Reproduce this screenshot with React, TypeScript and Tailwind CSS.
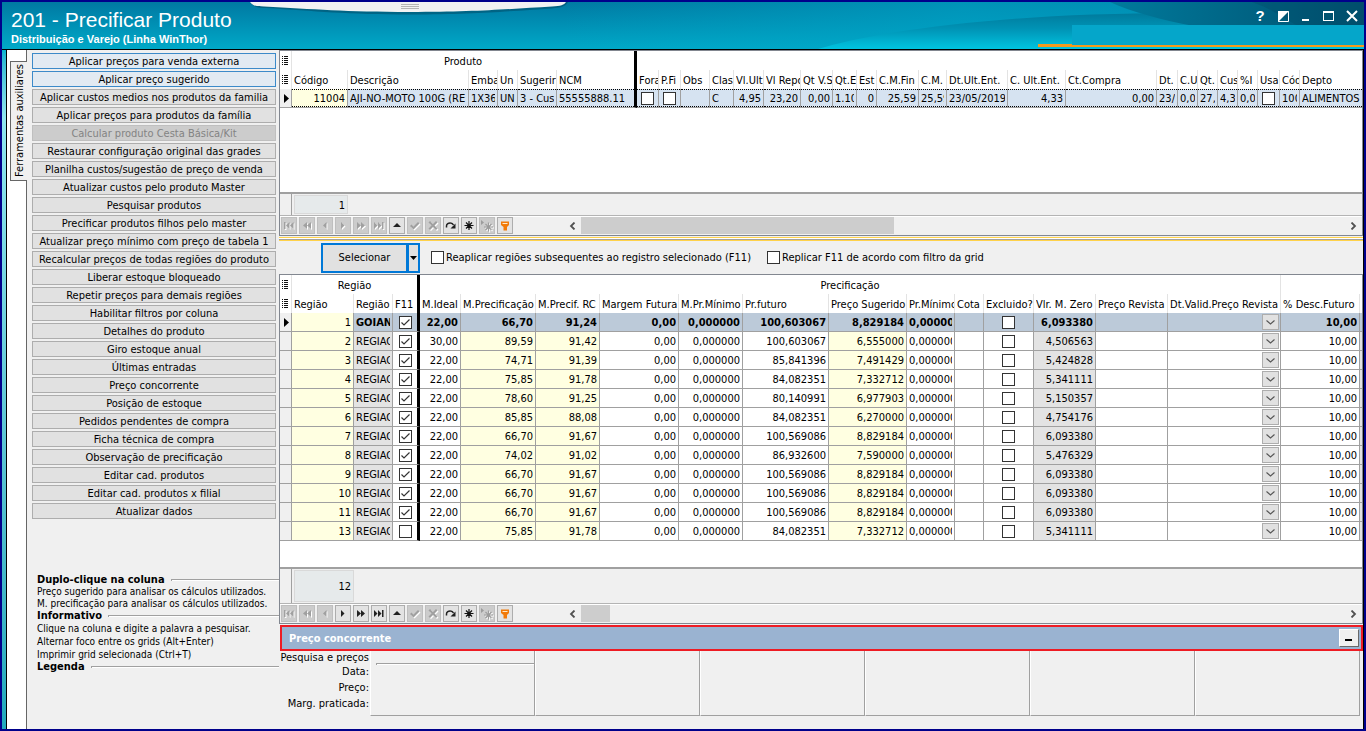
import React from "react";

const FONT = "font-['DejaVu_Sans_Condensed','Noto_Sans',sans-serif]";

const sideButtons = [
  "Aplicar preços para venda externa",
  "Aplicar preço sugerido",
  "Aplicar custos medios nos produtos da familia",
  "Aplicar preços para produtos da família",
  "Calcular produto Cesta Básica/Kit",
  "Restaurar configuração original das grades",
  "Planilha custos/sugestão de preço de venda",
  "Atualizar custos pelo produto Master",
  "Pesquisar produtos",
  "Precificar produtos filhos pelo master",
  "Atualizar preço mínimo com preço de tabela 1",
  "Recalcular preços de todas regiões do produto",
  "Liberar estoque bloqueado",
  "Repetir preços para demais regiões",
  "Habilitar filtros por coluna",
  "Detalhes do produto",
  "Giro estoque anual",
  "Últimas entradas",
  "Preço concorrente",
  "Posição de estoque",
  "Pedidos pendentes de compra",
  "Ficha técnica de compra",
  "Observação de precificação",
  "Editar cad. produtos",
  "Editar cad. produtos x filial",
  "Atualizar dados",
];

type Col = { w: string; head: string; val?: string; right?: boolean; kind?: "check" | "yellow" };

const productCols: Col[] = [
  { w: "w-[56px]", head: "Código", val: "11004", right: true, kind: "yellow" },
  { w: "w-[121px]", head: "Descrição", val: "AJI-NO-MOTO 100G (RE" },
  { w: "w-[29px]", head: "Emba", val: "1X36" },
  { w: "w-[20px]", head: "Un", val: "UN" },
  { w: "w-[39px]", head: "Sugerir", val: "3 - Cus" },
  { w: "w-[80px]", head: "NCM", val: "55555888.11" },
  { w: "w-[22px]", head: "Fora", kind: "check" },
  { w: "w-[22px]", head: "P.Fi", kind: "check" },
  { w: "w-[29px]", head: "Obs" },
  { w: "w-[24px]", head: "Clas", val: "C" },
  { w: "w-[30px]", head: "Vl.Ult", val: "4,95", right: true },
  { w: "w-[37px]", head: "Vl Repo", val: "23,20", right: true },
  { w: "w-[32px]", head: "Qt V.S", val: "0,00", right: true },
  { w: "w-[24px]", head: "Qt.E", val: "1.10" },
  { w: "w-[20px]", head: "Est", val: "0", right: true },
  { w: "w-[42px]", head: "C.M.Fin", val: "25,59", right: true },
  { w: "w-[28px]", head: "C.M.", val: "25,59" },
  { w: "w-[61px]", head: "Dt.Ult.Ent.", val: "23/05/2019" },
  { w: "w-[58px]", head: "C. Ult.Ent.", val: "4,33", right: true },
  { w: "w-[91px]", head: "Ct.Compra", val: "0,00", right: true },
  { w: "w-[21px]", head: "Dt.", val: "23/" },
  { w: "w-[20px]", head: "C.U", val: "0,0" },
  { w: "w-[20px]", head: "Qt.", val: "27," },
  { w: "w-[20px]", head: "Cus", val: "4,3" },
  { w: "w-[20px]", head: "%I", val: "0,0" },
  { w: "w-[22px]", head: "Usa", kind: "check" },
  { w: "w-[20px]", head: "Cód", val: "100" },
  { w: "w-auto", head: "Depto", val: "ALIMENTOS" },
];

type RCol = { w: string; head: string };
const regionCols: RCol[] = [
  { w: "w-[62px]", head: "Região" },
  { w: "w-[39px]", head: "Região" },
  { w: "w-[27px]", head: "F11" },
  { w: "w-[41px]", head: "M.Ideal" },
  { w: "w-[75px]", head: "M.Precificação" },
  { w: "w-[64px]", head: "M.Precif. RC" },
  { w: "w-[79px]", head: "Margem Futura" },
  { w: "w-[64px]", head: "M.Pr.Mínimo" },
  { w: "w-[86px]", head: "Pr.futuro" },
  { w: "w-[78px]", head: "Preço Sugerido" },
  { w: "w-[48px]", head: "Pr.Mínimo" },
  { w: "w-[29px]", head: "Cota" },
  { w: "w-[50px]", head: "Excluido?" },
  { w: "w-[62px]", head: "Vlr. M. Zero" },
  { w: "w-[72px]", head: "Preço Revista" },
  { w: "w-[113px]", head: "Dt.Valid.Preço Revista" },
  { w: "w-[79px]", head: "% Desc.Futuro" },
];

type Row = [string, string, boolean, string, string, string, string, string, string];
const rows: Row[] = [
  ["1", "GOIAN", true, "22,00", "66,70", "91,24", "100,603067", "8,829184", "6,093380"],
  ["2", "REGIAO", true, "30,00", "89,59", "91,42", "100,603067", "6,555000", "4,506563"],
  ["3", "REGIAO", true, "22,00", "74,71", "91,39", "85,841396", "7,491429", "5,424828"],
  ["4", "REGIAO", true, "22,00", "75,85", "91,78", "84,082351", "7,332712", "5,341111"],
  ["5", "REGIAO", true, "22,00", "78,60", "91,25", "80,140991", "6,977903", "5,150357"],
  ["6", "REGIAO", true, "22,00", "85,85", "88,08", "84,082351", "6,270000", "4,754176"],
  ["7", "REGIAO", true, "22,00", "66,70", "91,67", "100,569086", "8,829184", "6,093380"],
  ["8", "REGIAO", true, "22,00", "74,02", "91,02", "86,932600", "7,590000", "5,476329"],
  ["9", "REGIAO", true, "22,00", "66,70", "91,67", "100,569086", "8,829184", "6,093380"],
  ["10", "REGIAO", true, "22,00", "66,70", "91,67", "100,569086", "8,829184", "6,093380"],
  ["11", "REGIAO", true, "22,00", "66,70", "91,67", "100,569086", "8,829184", "6,093380"],
  ["13", "REGIAO", false, "22,00", "75,85", "91,78", "84,082351", "7,332712", "5,341111"],
];

function Check({ label, id, checked = false }: { label?: string; id?: string; checked?: boolean }) {
  return (
    <span className="relative inline-grid size-[13px] shrink-0 place-items-center">
      <input
        type="checkbox"
        id={id}
        aria-label={label}
        defaultChecked={checked}
        className="peer col-start-1 row-start-1 size-[13px] appearance-none border border-[#333] bg-white"
      />
      <svg viewBox="0 0 13 13" className="pointer-events-none col-start-1 row-start-1 hidden size-[13px] peer-checked:block">
        <path d="M2.5 6.5 5 9 10.5 3.5" fill="none" stroke="#333" strokeWidth="1.2" />
      </svg>
    </span>
  );
}

function ListIcon() {
  return (
    <svg viewBox="0 0 7 9" className="mx-auto h-[9px] w-[7px]" shapeRendering="crispEdges">
      {[0, 2, 4, 6, 8].map((y) => (
        <path key={y} d={`M0 ${y}h1v1h-1zM2 ${y}h4v1h-4z`} fill="#111" />
      ))}
    </svg>
  );
}

function Marker() {
  return (
    <svg viewBox="0 0 5 9" className="ml-[4px] h-[9px] w-[5px]">
      <path d="M0 0 5 4.5 0 9z" fill="#000" />
    </svg>
  );
}

const navIcons: { name: string; d: string; always?: boolean }[] = [
  { name: "Primeiro", d: "M2 3h1.5v7H2zM7.5 3v7L4 6.5zM11.5 3v7L8 6.5z" },
  { name: "Página anterior", d: "M7 3v7L3 6.5zM11 3v7L7 6.5z" },
  { name: "Anterior", d: "M8.5 3v7L5 6.5z" },
  { name: "Próximo", d: "M5 3v7L8.5 6.5z" },
  { name: "Próxima página", d: "M3 3v7l4-3.5zM7 3v7l4-3.5z" },
  { name: "Último", d: "M2 3v7l3.5-3.5zM6 3v7l3.5-3.5zM10 3h1.500v7H10z" },
  { name: "Subir", d: "M7 4l4 4H3z", always: true },
  { name: "Confirmar", d: "M2 7l1.500-1.500L5.500 7.500 10 3l1.500 1.500-6 6z" },
  { name: "Cancelar", d: "M2.500 3.500 4 2l3 3 3-3 1.500 1.500-3 3 3 3L10 11 7 8l-3 3-1.500-1.500 3-3z" },
];

function NavButton({ name, enabled, children }: { name: string; enabled: boolean; children: React.ReactNode }) {
  return (
    <button
      type="button"
      aria-label={name}
      disabled={!enabled}
      className={
        enabled
          ? "grid h-[17px] w-4 place-items-center border border-[#adadad] bg-[#e3e3e3] text-[#222]"
          : "grid h-[17px] w-4 place-items-center border border-[#bfbfbf] bg-[#cccccc] text-[#a0a0a0]"
      }
    >
      <svg viewBox="0 0 14 14" className="size-[14px]">
        {children}
      </svg>
    </button>
  );
}

function Glyph({ d, enabled }: { d: string; enabled: boolean }) {
  return (
    <>
      {!enabled && <path d={d} fill="#fff" transform="translate(1 1)" />}
      <path d={d} fill="currentColor" />
    </>
  );
}

function Navigator({ forward, thumb }: { forward: boolean; thumb: string }) {
  const star = "M7 2v9M2.500 6.500h9M4 3.500l6 6M10 3.500l-6 6";
  return (
    <div className="flex h-[19px] items-center border-t border-white pb-[1px] pl-[1px]">
      <div className="flex w-[283px] shrink-0 gap-[2px]">
        {navIcons.map((n, i) => {
          const enabled = !!n.always || (forward && i >= 3 && i <= 5);
          return (
            <NavButton key={n.name} name={n.name} enabled={enabled}>
              <Glyph d={n.d} enabled={enabled} />
            </NavButton>
          );
        })}
        <NavButton name="Atualizar" enabled>
          <path d="M2.500 8.500V7c0-2 2-3.200 4-3 1.500.1 2.500 1 3 2" fill="none" stroke="currentColor" strokeWidth="1.500" />
          <path d="M11.500 4.500v5h-5z" fill="currentColor" />
        </NavButton>
        <NavButton name="Marcar" enabled>
          <path d={star} stroke="#111" strokeWidth="1.200" fill="none" />
        </NavButton>
        <NavButton name="Ir para marca" enabled={false}>
          <g transform="translate(1.500 1.500)">
            <path d={star} stroke="#fff" strokeWidth="1.200" fill="none" transform="translate(1 1)" />
            <path d={star} stroke="#9c9c9c" strokeWidth="1.200" fill="none" />
          </g>
          <path d="M1 1l3 2.500L1 6z" fill="#9c9c9c" />
        </NavButton>
        <NavButton name="Filtrar" enabled>
          <path d="M3 2.500h8V6L9 8v3.500H5.500V8L3 6z" fill="#f27a08" />
          <path d="M4.500 4.500h5" stroke="#ffe9c8" />
        </NavButton>
      </div>
      <div className="flex h-[17px] min-w-0 flex-1 items-center">
        <button type="button" aria-label="Rolar para a esquerda" className="grid h-[17px] w-[17px] shrink-0 place-items-center">
          <svg viewBox="0 0 7 8" className="h-2 w-[7px]">
            <path d="M5.500.5 2 4l3.500 3.500" fill="none" stroke="#505050" strokeWidth="1.800" />
          </svg>
        </button>
        <div className="h-full min-w-0 flex-1">
          <div className={thumb} />
        </div>
        <button type="button" aria-label="Rolar para a direita" className="grid h-[17px] w-[17px] shrink-0 place-items-center">
          <svg viewBox="0 0 7 8" className="h-2 w-[7px]">
            <path d="M1.500.5 5 4 1.500 7.500" fill="none" stroke="#505050" strokeWidth="1.800" />
          </svg>
        </button>
      </div>
    </div>
  );
}

const clip = "overflow-hidden whitespace-nowrap";

function Cell({ children, right, className = "" }: { children?: React.ReactNode; right?: boolean; className?: string }) {
  return (
    <td className={`h-[19px] border-r border-b border-[#a0a0a0] p-0 px-[2px] pt-[2px] leading-4 ${className}`}>
      <div className={right ? `${clip} text-right` : clip}>{children}</div>
    </td>
  );
}

function ProductGrid() {
  return (
    <table className="w-full table-fixed border-separate border-spacing-0 bg-white leading-4">
      <colgroup>
        <col className="w-[12px]" />
        {productCols.map((c, i) => (
          <col key={i} className={c.w} />
        ))}
      </colgroup>
      <thead>
        <tr className="h-[19px]">
          <th className="border-r border-[#e3e3e3] p-0"><ListIcon /></th>
          <th colSpan={6} className="border-r-[3px] border-black p-0 pt-[2px] font-normal">Produto</th>
          <th colSpan={22} className="p-0" />
        </tr>
        <tr className="h-[19px]">
          <th className="border-r border-[#e3e3e3] p-0"><ListIcon /></th>
          {productCols.map((c, i) => (
            <th
              key={i}
              className={
                i === 5
                  ? "border-r-[3px] border-black p-0 pt-[3px] pl-[2px] text-left font-normal"
                  : i === productCols.length - 1
                    ? "p-0 pt-[3px] pl-[2px] text-left font-normal"
                    : "border-r border-[#e3e3e3] p-0 pt-[3px] pl-[2px] text-left font-normal"
              }
            >
              <div className={clip}>{c.head}</div>
            </th>
          ))}
        </tr>
      </thead>
      <tbody>
        <tr>
          <td className="border-r border-b border-[#a0a0a0] bg-[#f0f0f0] p-0"><Marker /></td>
          {productCols.map((c, i) => (
            <td
              key={i}
              className={
                i === 5
                  ? "border-r-[3px] border-b border-r-black border-b-[#a0a0a0] bg-[#d6e3f1] p-0"
                  : c.kind === "yellow"
                    ? "border-r border-b border-[#a0a0a0] bg-[#ffffe1] p-0"
                    : i === productCols.length - 1
                      ? "border-b border-[#a0a0a0] bg-[#d6e3f1] p-0"
                      : "border-r border-b border-[#a0a0a0] bg-[#d6e3f1] p-0"
              }
            >
              <div className="flex h-[18px] items-center border-y border-dotted border-black px-[2px] leading-4">
                {c.kind === "check" ? (
                  <span className="flex flex-1 justify-center"><Check label={c.head} /></span>
                ) : (
                  <span className={c.right ? `flex-1 pt-px text-right ${clip}` : `flex-1 pt-px ${clip}`}>{c.val}</span>
                )}
              </div>
            </td>
          ))}
        </tr>
      </tbody>
    </table>
  );
}

function RegionGrid() {
  return (
    <table className="w-full table-fixed border-separate border-spacing-0 bg-white leading-4">
      <colgroup>
        <col className="w-[12px]" />
        {regionCols.map((c, i) => (
          <col key={i} className={c.w} />
        ))}
        <col />
      </colgroup>
      <thead>
        <tr className="h-[19px]">
          <th className="border-r border-[#e3e3e3] p-0"><ListIcon /></th>
          <th colSpan={3} className="border-r-[3px] border-black p-0 pt-[3px] font-normal">Região</th>
          <th colSpan={13} className="border-r border-[#e3e3e3] p-0 pt-[3px] font-normal">Precificação</th>
          <th colSpan={2} className="p-0" />
        </tr>
        <tr className="h-[19px]">
          <th className="border-r border-[#e3e3e3] p-0"><ListIcon /></th>
          {regionCols.map((c, i) => (
            <th
              key={i}
              className={
                i === 2
                  ? "border-r-[3px] border-black p-0 pt-[3px] pl-[2px] text-left font-normal"
                  : "border-r border-[#e3e3e3] p-0 pt-[3px] pl-[2px] text-left font-normal"
              }
            >
              <div className={clip}>{c.head}</div>
            </th>
          ))}
          <th className="p-0" />
        </tr>
      </thead>
      <tbody>
        {rows.map((r, i) => {
          const sel = i === 0;
          const bg = sel ? "bg-[#bccad9]" : "bg-white";
          const yellow = sel ? "bg-[#bccad9]" : "bg-[#ffffe1]";
          const gray = sel ? "bg-[#bccad9]" : "bg-[#e3e3e3]";
          return (
            <tr key={r[0]} className={sel ? "font-bold" : ""}>
              <td className="h-[19px] border-r border-b border-[#a0a0a0] bg-[#f0f0f0] p-0 leading-[18px]">{sel && <Marker />}</td>
              <Cell right className="bg-[#ffffe1] font-normal">{r[0]}</Cell>
              <Cell className={gray}>{r[1]}</Cell>
              <td className={`h-[19px] border-r-[3px] border-b border-r-black border-b-[#a0a0a0] p-0 ${bg}`}>
                <div className="flex items-center justify-center"><Check label={`F11 região ${r[0]}`} checked={r[2]} /></div>
              </td>
              <Cell right className={bg}>{r[3]}</Cell>
              <Cell right className={yellow}>{r[4]}</Cell>
              <Cell right className={yellow}>{r[5]}</Cell>
              <Cell right className={bg}>0,00</Cell>
              <Cell right className={bg}>0,000000</Cell>
              <Cell right className={bg}>{r[6]}</Cell>
              <Cell right className={yellow}>{r[7]}</Cell>
              <Cell className={bg}>0,000000</Cell>
              <Cell className={bg} />
              <td className={`h-[19px] border-r border-b border-[#a0a0a0] p-0 ${bg}`}>
                <div className="flex items-center justify-center"><Check label={`Excluido região ${r[0]}`} /></div>
              </td>
              <Cell right className={gray}>{r[8]}</Cell>
              <Cell className={bg} />
              <td className={`h-[19px] border-r border-b border-[#a0a0a0] p-0 ${bg}`}>
                <div className="flex items-center justify-end pr-[1px]">
                  <button type="button" aria-label={`Data de validade região ${r[0]}`} className="grid h-4 w-[17px] place-items-center border border-[#adadad] bg-[#e1e1e1]">
                    <svg viewBox="0 0 9 5" className="h-[5px] w-[9px]">
                      <path d="M.5.5l4 3.500 4-3.500" fill="none" stroke="#555" strokeWidth="1.100" />
                    </svg>
                  </button>
                </div>
              </td>
              <Cell right className={bg}>10,00</Cell>
              <td className={sel ? "border-b border-[#a0a0a0] bg-[#bccad9] p-0" : "border-b border-[#a0a0a0] bg-[#e3e3e3] p-0"} />
            </tr>
          );
        })}
      </tbody>
    </table>
  );
}

function InfoTitle({ children }: { children: React.ReactNode }) {
  return (
    <h2 className="flex items-center gap-[6px] leading-3 font-bold">
      {children}
      <span className="h-[2px] flex-1 border-t border-l border-[#a0a0a0] bg-white" />
    </h2>
  );
}

function Header() {
  return (
    <header className="relative flex h-[48px] items-start justify-between overflow-hidden border-b border-black bg-linear-to-b from-[#0079a2] to-[#00a9c8] font-['Liberation_Sans',sans-serif] text-white">
      <svg viewBox="0 0 1362 47" preserveAspectRatio="none" className="absolute inset-0 h-[47px] w-full">
        <defs>
          <linearGradient id="sky" x1="0" x2="1" y1="0" y2="0">
            <stop offset="0" stopColor="#00a9c8" stopOpacity="0" />
            <stop offset=".5" stopColor="#00a4c6" stopOpacity=".6" />
            <stop offset="1" stopColor="#0090b4" stopOpacity=".7" />
          </linearGradient>
          <linearGradient id="wave" x1="0" x2="0" y1="0" y2="1">
            <stop offset="0" stopColor="#007a9c" />
            <stop offset=".45" stopColor="#0094b6" />
            <stop offset="1" stopColor="#00c4e0" />
          </linearGradient>
          <linearGradient id="deep" x1="0" x2="1" y1="0" y2="0">
            <stop offset="0" stopColor="#007a9c" />
            <stop offset="1" stopColor="#00506f" />
          </linearGradient>
        </defs>
        <path d="M560 0H1362V47H560z" fill="url(#sky)" />
        <path d="M816 47C870 31 990 11 1180 11L1362 14V47z" fill="url(#wave)" />
        <path d="M1108 0H1362V24H1192C1160 18 1130 10 1108 0z" fill="url(#deep)" />
        <path d="M1250 0c22 8 32 16 46 24h66V0z" fill="#004a68" opacity=".35" />
        <path d="M1070 23H1362V43H1070z" fill="#05a6ca" />
        <path d="M1036 42H1070V43H1362V45H1036z" fill="#f59a1c" />
      </svg>
      <svg viewBox="0 0 320 14" className="absolute top-0 left-[248px] h-[14px] w-[320px]">
        <path d="M0 0c3 5 8 6 16 6 50 3 80 6.500 145 6.500S260 9 302 6.500c9-1 14-2 16-6.500z" fill="#00506c" opacity=".6" />
        <path d="M0 0c3 4 6 4.500 14 4.500C64 7 95 10 160 10s100-3 142-5.500c9-.5 12-1.500 14-4.500z" fill="#f2f2f2" />
        <path d="M151 2.500h18M151 4.500h18M151 6.500h18" stroke="#b5b5b5" />
      </svg>
      <div className="relative pl-[9px]">
        <h1 className="pt-[6px] text-[21px] leading-6">201 - Precificar Produto</h1>
        <p className="text-[11px] leading-[14px] font-bold">Distribuição e Varejo (Linha WinThor)</p>
      </div>
      <div className="relative flex h-7 items-center gap-[7px] pr-1">
        <button type="button" className="w-4 text-center text-[15px] leading-4 font-bold">?</button>
        <button type="button" aria-label="Alternar" className="grid size-4 place-items-center">
          <svg viewBox="0 0 11 11" className="size-[11px]"><path d="M.5.5h10v10H.5z" fill="none" stroke="#fff" /><path d="M0 11V0h11z" fill="#fff" /></svg>
        </button>
        <button type="button" aria-label="Minimizar" className="grid size-4 place-items-center">
          <svg viewBox="0 0 12 12" className="size-3"><path d="M2 9h7v2H2z" fill="#fff" /></svg>
        </button>
        <button type="button" aria-label="Maximizar" className="grid size-4 place-items-center">
          <svg viewBox="0 0 12 12" className="size-3"><path d="M0 1h11v10H0zM1 3v7h9V3z" fill="#fff" fillRule="evenodd" /></svg>
        </button>
        <button type="button" aria-label="Fechar" className="grid size-4 place-items-center">
          <svg viewBox="0 0 12 12" className="size-3"><path d="M1 1l10 10M11 1L1 11" stroke="#fff" strokeWidth="2" /></svg>
        </button>
      </div>
    </header>
  );
}

export default function App() {
  return (
    <div className={`flex min-h-screen flex-col overflow-hidden border-2 border-[#00008b] bg-[#f0f0f0] text-[11px] text-black ${FONT}`}>
      <Header />
      <div className="flex flex-1">
        <div className="w-1 shrink-0 bg-linear-to-b from-[#00b4d0] via-[#8fe6f0] via-10% to-[#1fa9bd]" />
        <div className="flex w-5 shrink-0 flex-col items-end border-l border-black bg-white">
          <button
            type="button"
            className="relative -mr-px mt-[11px] flex h-[120px] w-[17px] items-center justify-center border border-r-0 border-[#666] bg-[#f0f0f0] pl-[2px]"
          >
            <span className="rotate-180 whitespace-nowrap [writing-mode:vertical-rl]">Ferramentas auxiliares</span>
          </button>
        </div>
        <aside className="flex w-[253px] shrink-0 flex-col border-l border-[#666]">
          <div className="flex flex-col gap-[2px] pt-[3px] pr-[3px] pl-[5px]">
            {sideButtons.map((b, i) => (
              <button
                key={b}
                type="button"
                disabled={i === 4}
                className={
                  i < 2
                    ? "h-4 border border-[#3c8ac9] bg-[#e2eaf2] pt-[2px] leading-3 whitespace-nowrap"
                    : i === 4
                      ? "h-4 border border-[#bfbfbf] bg-[#cccccc] pt-[2px] leading-3 whitespace-nowrap text-[#838383]"
                      : "h-4 border border-[#adadad] bg-[#e1e1e1] pt-[2px] leading-3 whitespace-nowrap"
                }
              >
                {b}
              </button>
            ))}
          </div>
          <div className="mt-auto pb-14 pl-[10px] whitespace-nowrap">
            <InfoTitle>Duplo-clique na coluna</InfoTitle>
            <div className="text-[10px] leading-3">
              <p>Preço sugerido para analisar os cálculos utilizados.</p>
              <p>M. precificação para analisar os cálculos utilizados.</p>
            </div>
            <InfoTitle>Informativo</InfoTitle>
            <div className="text-[10px] leading-[13px]">
              <p>Clique na coluna e digite a palavra a pesquisar.</p>
              <p>Alternar foco entre os grids (Alt+Enter)</p>
              <p>Imprimir grid selecionada (Ctrl+T)</p>
            </div>
            <InfoTitle>Legenda</InfoTitle>
          </div>
        </aside>
        <main className="flex min-w-0 flex-1 flex-col border-r border-black">
          <section className="border border-[#828790]">
            <ProductGrid />
            <div className="h-[84px] bg-white" />
            <div className="flex h-[23px] border-t-2 border-[#a0a0a0]">
              <div className="w-[12px] border-r border-[#a0a0a0]" />
              <output className="mt-px ml-[2px] h-[19px] w-[54px] border border-[#d9d9d9] bg-[#e6eaeb] pt-px pr-[2px] text-right leading-[18px]">1</output>
            </div>
            <div className="border-t border-[#b4b4b4]">
              <Navigator forward={false} thumb="h-full w-[41%] bg-[#cdcdcd]" />
            </div>
          </section>
          <div className="mt-px h-1 border-y border-[#ffd24a] bg-[#a0a0a0]">
            <div className="h-px bg-white" />
          </div>
          <div className="flex h-[33px] items-center pl-[42px]">
            <div className="flex h-[30px] border-2 border-[#0078d7] bg-[#e1e1e1]">
              <button type="button" className="w-[86px] border-r-[3px] border-[#0078d7] pt-[2px]">Selecionar</button>
              <button type="button" aria-label="Mais opções" className="grid w-[9px] place-items-center">
                <svg viewBox="0 0 7 4" className="h-1 w-[7px]"><path d="M0 0h7L3.500 4z" fill="#000" /></svg>
              </button>
            </div>
            <div className="ml-[11px] flex items-center gap-[2px]">
              <Check id="reaplicar" />
              <label htmlFor="reaplicar" className="pt-[2px]">Reaplicar regiões subsequentes ao registro selecionado (F11)</label>
            </div>
            <div className="ml-4 flex items-center gap-[2px]">
              <Check id="replicar" />
              <label htmlFor="replicar" className="pt-[2px]">Replicar F11 de acordo com filtro da grid</label>
            </div>
          </div>
          <section className="flex flex-1 flex-col border border-[#828790]">
            <RegionGrid />
            <div className="min-h-[26px] flex-1 bg-white" />
            <div className="flex h-9 border-t-2 border-[#a0a0a0]">
              <div className="w-[12px] border-r border-[#a0a0a0]" />
              <output className="mt-px ml-[2px] h-8 w-[60px] border border-[#d9d9d9] bg-[#e6eaeb] pr-[2px] text-right leading-[31px]">12</output>
            </div>
            <div className="border-t border-[#b4b4b4]">
              <Navigator forward thumb="h-full w-[29px] bg-[#cdcdcd]" />
            </div>
          </section>
          <div className="mt-px ml-px flex h-[26px] items-center justify-between border-2 border-[#ee1c24] bg-[#9ab3d1] pr-[2px] pl-[7px]">
            <h2 className="pt-[2px] font-bold text-white">Preço concorrente</h2>
            <button type="button" aria-label="Recolher" className="grid h-[18px] w-5 place-items-center border border-t-white border-r-[#696969] border-b-[#696969] border-l-white bg-[#f0f0f0]">
              <svg viewBox="0 0 8 8" className="mt-1 size-2"><path d="M0 3h7v2H0z" fill="#000" /></svg>
            </button>
          </div>
          <div className="mb-[13px] flex h-[65px] pr-[3px]">
            <div className="flex w-[91px] shrink-0 flex-col items-end pr-px whitespace-nowrap">
              <span className="leading-[13px]">Pesquisa e preços</span>
              <span className="leading-4">Data:</span>
              <span className="leading-4">Preço:</span>
              <span className="leading-4">Marg. praticada:</span>
            </div>
            {[0, 1, 2, 3, 4, 5].map((n) => (
              <div key={n} className="flex-1 border-r border-b border-l border-r-[#a0a0a0] border-b-[#a0a0a0] border-l-white">
                {n === 0 && <div className="mt-3 ml-[5px] h-[2px] border-t border-l border-[#a0a0a0] bg-white" />}
              </div>
            ))}
          </div>
        </main>
      </div>
    </div>
  );
}
